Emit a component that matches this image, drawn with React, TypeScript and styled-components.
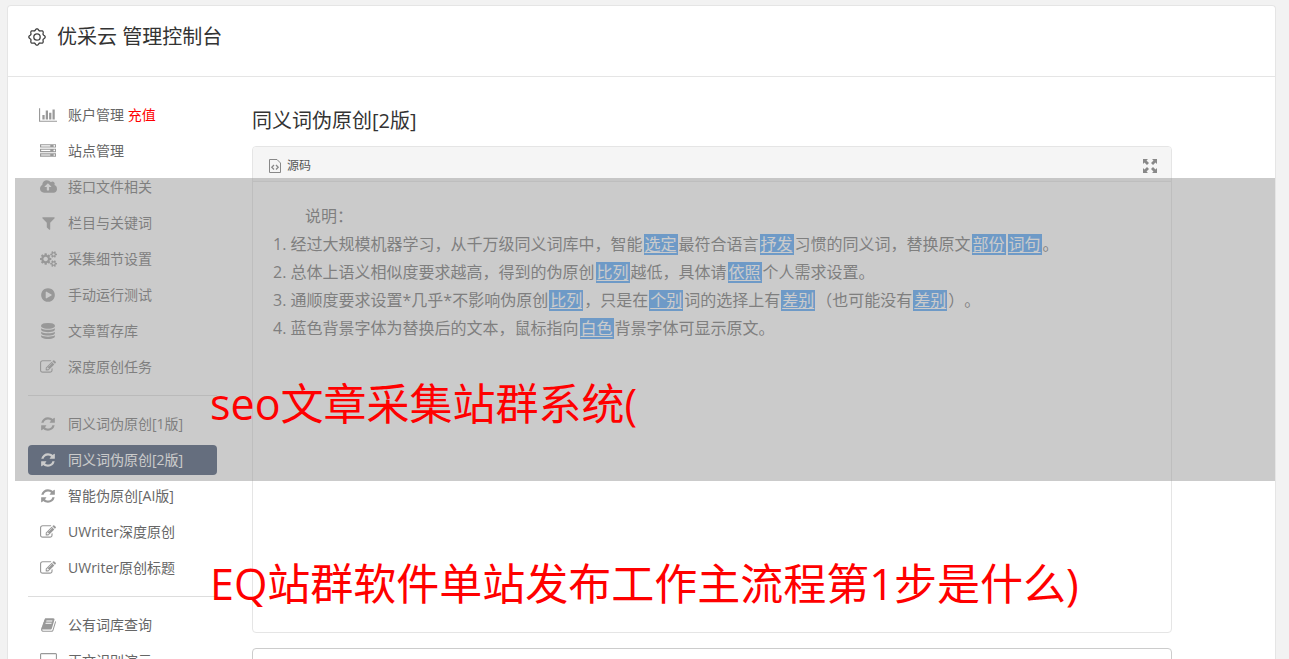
import React from 'react';
import styled, { createGlobalStyle } from 'styled-components';

const GlobalStyle = createGlobalStyle`
  *, *::before, *::after { box-sizing: border-box; }
  body {
    margin: 0;
    background: #f2f2f2;
    font-family: "Open Sans", "Noto Sans CJK SC", sans-serif;
    font-weight: 400;
    font-size: 14px;
    color: #333;
    text-spacing-trim: space-all;
  }
`;

const Page = styled.div`
  position: relative;
  display: flex;
  height: 100vh;
  padding: 5px 13px 0 7px;
  overflow: hidden;
`;

const Panel = styled.div`
  flex: 1;
  min-width: 0;
  min-height: 100vh;
  background: #fff;
  border: 1px solid #e5e5e5;
  border-bottom: 0;
  border-radius: 4px 4px 0 0;
`;

const Header = styled.header`
  display: flex;
  align-items: center;
  gap: 11px;
  height: 71px;
  padding: 0 20px 8px;
  border-bottom: 1px solid #e5e5e5;
`;

const Brand = styled.h1`
  margin: 0;
  font-size: 20px;
  line-height: 28px;
  font-weight: 400;
`;

const Body = styled.div`
  display: flex;
  align-items: flex-start;
  gap: 35px;
  padding: 23px 103px 0 20px;
`;

const Nav = styled.nav`
  flex: none;
  width: 189px;
`;

const NavList = styled.ul`
  display: flex;
  flex-direction: column;
  gap: 6px;
  margin: 0;
  padding: 0;
  list-style: none;
`;

const Divider = styled.hr`
  height: 1px;
  margin: 13px 0;
  border: 0;
  background: #ddd;
`;

const NavLink = styled.a<{ $active?: boolean }>`
  display: flex;
  align-items: center;
  gap: 10px;
  height: 30px;
  padding: 0 10px;
  border-radius: 4px;
  color: ${(p) => (p.$active ? '#fff' : '#666')};
  background: ${(p) => (p.$active ? '#334565' : 'transparent')};
  line-height: 20px;
  text-decoration: none;
  white-space: nowrap;
`;

const IconSlot = styled.span<{ $active?: boolean }>`
  display: flex;
  flex: none;
  justify-content: center;
  width: 20px;
  color: ${(p) => (p.$active ? '#fff' : '#999')};
`;

const Recharge = styled.span`
  color: #f00;
`;

const Main = styled.main`
  flex: 1;
  min-width: 0;
`;

const Title = styled.h2`
  margin: 7px 0 11px;
  font-size: 20px;
  line-height: 28px;
  font-weight: 400;
`;

const Card = styled.section`
  display: flex;
  flex-direction: column;
  min-height: 487px;
  border: 1px solid #e5e5e5;
  border-radius: 4px;
  overflow: hidden;
`;

const Toolbar = styled.div`
  display: flex;
  align-items: center;
  justify-content: space-between;
  height: 35px;
  padding: 3px 14px 0 16px;
  background: #f5f5f5;
  border-bottom: 1px solid #e5e5e5;
`;

const ToolButton = styled.button`
  display: flex;
  align-items: center;
  gap: 6px;
  margin: 0;
  padding: 0;
  border: 0;
  background: none;
  color: #555;
  font: inherit;
  font-size: 12px;
  line-height: 16px;
`;

const Content = styled.div`
  padding: 20px;
  color: #666;
  font-size: 16px;
  line-height: 28px;
`;

const Line = styled.p<{ $indent?: boolean }>`
  margin: 0;
  text-indent: ${(p) => (p.$indent ? '2em' : '0')};
`;

const Word = styled.span`
  display: inline-block;
  height: 21px;
  margin: 0 1px;
  padding: 0 1px;
  background: #459df7;
  color: #fff;
  line-height: 20px;
  text-decoration: underline;
  text-underline-offset: 2px;
  text-indent: 0;
`;

const Result = styled.textarea`
  display: block;
  width: 100%;
  height: 120px;
  margin-top: 15px;
  padding: 8px;
  border: 1px solid #ccc;
  border-radius: 4px;
  background: #fff;
  resize: none;
  font: inherit;
`;

const Shade = styled.div`
  position: absolute;
  top: 178px;
  left: 15px;
  right: 14px;
  height: 303px;
  background: rgba(151, 151, 151, 0.5);
  pointer-events: none;
`;

const Caption = styled.div`
  position: absolute;
  top: 314px;
  left: 210px;
  color: #f00;
  font-size: 43px;
  line-height: 180px;
  white-space: nowrap;
  pointer-events: none;
`;

type Glyph = { w: number; d: string };

const icons: Record<string, Glyph> = {
  chart: {
    w: 2048,
    d: 'M640 896v512H384V896h256zm384-512v1024H768V384h256zm1024 1152v128H0V128h128v1408h1920zM1408 640v768h-256V640h256zm384-384v1152h-256V256h256z',
  },
  server: {
    w: 1792,
    d: 'M128 1408h1024v-128H128v128zm0-512h1024V768H128v128zm1568 448q0-40-28-68t-68-28-68 28-28 68 28 68 68 28 68-28 28-68zM128 384h1024V256H128v128zm1568 448q0-40-28-68t-68-28-68 28-28 68 28 68 68 28 68-28 28-68zm0-512q0-40-28-68t-68-28-68 28-28 68 28 68 68 28 68-28 28-68zm96 832v384H0v-384h1792zm0-512v384H0V640h1792zm0-512v384H0V128h1792z',
  },
  cloud: {
    w: 1920,
    d: 'M1280 864q0-14-9-23L919 489q-9-9-23-9t-23 9L522 840q-10 12-10 24 0 14 9 23t23 9h224v352q0 13 9.5 22.5t22.5 9.5h192q13 0 22.5-9.5t9.5-22.5V896h224q13 0 22.5-9.5t9.5-22.5zm640 288q0 159-112.5 271.5T1536 1536H448q-185 0-316.5-131.5T0 1088q0-130 70-240t188-165q-2-30-2-43 0-212 150-362t362-150q156 0 285.5 87T1242 346q71-62 166-62 106 0 181 75t75 181q0 76-41 138 130 31 213.5 135.5T1920 1152z',
  },
  filter: {
    w: 1408,
    d: 'M1403 295q17 41-14 70L896 858v742q0 42-39 59-13 5-25 5-27 0-45-19l-256-256q-19-19-19-45V858L19 365q-31-29-14-70 17-39 59-39h1280q42 0 59 39z',
  },
  cogs: {
    w: 1920,
    d: 'M896 896q0-106-75-181t-181-75-181 75-75 181 75 181 181 75 181-75 75-181zm768 512q0-52-38-90t-90-38-90 38-38 90q0 53 37.5 90.5t90.5 37.5 90.5-37.5 37.5-90.5zm0-1024q0-52-38-90t-90-38-90 38-38 90q0 53 37.5 90.5T1536 512t90.5-37.5T1664 384zm-384 421v185q0 10-7 19.5t-16 10.5l-155 24q-11 35-32 76 34 48 90 115 7 11 7 20 0 12-7 19-23 30-82.5 89.5T999 1423q-11 0-21-7l-115-90q-37 19-77 31-11 108-23 155-7 24-30 24H547q-11 0-20-7.5t-10-17.5l-23-153q-34-10-75-31l-118 89q-7 7-20 7-11 0-21-8-144-133-144-160 0-9 7-19 10-14 41-53t47-61q-23-44-35-82l-152-24q-10-1-17-9.5T0 987V802q0-10 7-19.5T23 772l155-24q11-35 32-76-34-48-90-115-7-11-7-20 0-12 7-20 22-30 82-89t79-59q11 0 21 7l115 90q34-18 77-32 11-108 23-154 7-24 30-24h186q11 0 20 7.5t10 17.5l23 153q34 10 75 31l118-89q8-7 20-7 11 0 21 8 144 133 144 160 0 8-7 19-12 16-42 54t-45 60q23 48 34 82l152 23q10 2 17 10.5t7 19.5zm640 533v140q0 16-149 31-12 27-30 52 51 113 51 138 0 4-4 7-122 71-124 71-8 0-46-47t-52-68q-20 2-30 2t-30-2q-14 21-52 68t-46 47q-2 0-124-71-4-3-4-7 0-25 51-138-18-25-30-52-149-15-149-31v-140q0-16 149-31 13-29 30-52-51-113-51-138 0-4 4-7 4-2 35-20t59-34 30-16q8 0 46 46.5t52 67.5q20-2 30-2t30 2q51-71 92-112l6-2q4 0 124 70 4 3 4 7 0 25-51 138 17 23 30 52 149 15 149 31zm0-1024v140q0 16-149 31-12 27-30 52 51 113 51 138 0 4-4 7-122 71-124 71-8 0-46-47t-52-68q-20 2-30 2t-30-2q-14 21-52 68t-46 47q-2 0-124-71-4-3-4-7 0-25 51-138-18-25-30-52-149-15-149-31V314q0-16 149-31 13-29 30-52-51-113-51-138 0-4 4-7 4-2 35-20t59-34 30-16q8 0 46 46.5t52 67.5q20-2 30-2t30 2q51-71 92-112l6-2q4 0 124 70 4 3 4 7 0 25-51 138 17 23 30 52 149 15 149 31z',
  },
  play: {
    w: 1536,
    d: 'M768 128q209 0 385.5 103T1433 510.5 1536 896t-103 385.5-279.5 279.5T768 1664t-385.5-103T103 1281.5 0 896t103-385.5T382.5 231 768 128zm384 823q32-18 32-55t-32-55L608 521q-31-19-64-1-32 19-32 56v640q0 37 32 56 16 8 32 8 17 0 32-9z',
  },
  database: {
    w: 1536,
    d: 'M768 768q237 0 443-43t325-127v170q0 69-103 128t-280 93.5-385 34.5-385-34.5-280-93.5T0 768V598q119 84 325 127t443 43zm0 768q237 0 443-43t325-127v170q0 69-103 128t-280 93.5-385 34.5-385-34.5-280-93.5T0 1536v-170q119 84 325 127t443 43zm0-384q237 0 443-43t325-127v170q0 69-103 128t-280 93.5-385 34.5-385-34.5-280-93.5T0 1152V982q119 84 325 127t443 43zM768 0q208 0 385 34.5t280 93.5 103 128v128q0 69-103 128t-280 93.5T768 640t-385-34.5T103 512 0 384V256q0-69 103-128t280-93.5T768 0z',
  },
  edit: {
    w: 1792,
    d: 'M888 1184l116-116-152-152-116 116v56h96v96h56zm440-720q-16-16-33 1L945 815q-17 17-1 33t33-1l350-350q17-17 1-33zm80 594v190q0 119-84.5 203.5T1120 1536H288q-119 0-203.5-84.5T0 1248V416q0-119 84.5-203.5T288 128h832q63 0 117 25 15 7 18 23 3 17-9 29l-49 49q-14 14-32 8-23-6-45-6H288q-66 0-113 47t-47 113v832q0 66 47 113t113 47h832q66 0 113-47t47-113v-126q0-13 9-22l64-64q15-15 35-7t20 29zm-96-738l288 288-672 672H640V992zm444 132l-92 92-288-288 92-92q28-28 68-28t68 28l152 152q28 28 28 68t-28 68z',
  },
  refresh: {
    w: 1536,
    d: 'M1511 1056q0 5-1 7-64 268-268 434.5T764 1664q-146 0-282.5-55T238 1452l-129 129q-19 19-45 19t-45-19-19-45v-448q0-26 19-45t45-19h448q26 0 45 19t19 45-19 45l-137 137q71 66 161 102t187 36q134 0 250-65t186-179q11-17 53-117 8-23 30-23h192q13 0 22.5 9.5t9.5 22.5zm25-800v448q0 26-19 45t-45 19h-448q-26 0-45-19t-19-45 19-45l138-138Q969 384 768 384q-134 0-250 65T332 628q-11 17-53 117-8 23-30 23H50q-13 0-22.5-9.5T18 736v-7q65-268 270-434.5T768 128q146 0 284 55.5T1297 340l130-129q19-19 45-19t45 19 19 45z',
  },
  book: {
    w: 1664,
    d: 'M1639 478q40 57 18 129l-275 906q-19 64-76.5 107.5T1183 1664H260q-77 0-148.5-53.5T12 1479q-24-67-2-127 0-4 3-27t4-37q1-8-3-21.5t-3-19.5q2-11 8-21t16.5-23.5T52 1179q23-38 45-91.5t30-91.5q3-10 .5-30t-.5-28q3-11 17-28t17-23q21-36 42-92t25-90q1-9-2.5-32t.5-28q4-13 22-30.5t22-22.5q19-26 42.5-84.5T340 411q1-8-3-25.5t-2-26.5q2-8 9-18t18-23 17-21q8-12 16.5-30.5t15-35 16-36 19.5-32 26.5-23.5 36-11.5T556 134l-1 3q38-9 51-9h761q74 0 114 56t18 130l-274 906q-36 119-71.5 153.5T1025 1408H156q-27 0-38 15-11 16-1 43 24 70 144 70h923q29 0 56-15.5t35-41.5l300-987q7-22 5-57 38 15 59 43zm-1064 2q-4 13 2 22.5t20 9.5h608q13 0 25.5-9.5T1247 480l21-64q4-13-2-22.5t-20-9.5H638q-13 0-25.5 9.5T596 416zm-83 256q-4 13 2 22.5t20 9.5h608q13 0 25.5-9.5T1164 736l21-64q4-13-2-22.5t-20-9.5H555q-13 0-25.5 9.5T513 672z',
  },
  desktop: {
    w: 1920,
    d: 'M1792 992V160q0-13-9.500-22.500T1760 128H160q-13 0-22.500 9.500T128 160v832q0 13 9.500 22.500t22.500 9.500h1600q13 0 22.500-9.500t9.500-22.500zm128-832v1088q0 66-47 113t-113 47h-544q0 37 16 77.500t32 71 16 43.500q0 26-19 45t-45 19H704q-26 0-45-19t-19-45q0-14 16-44t32-70 16-78H160q-66 0-113-47T0 1248V160Q0 94 47 47T160 0h1600q66 0 113 47t47 113z',
  },
};

function Icon({ name }: { name: string }) {
  const { w, d } = icons[name];
  return (
    <svg width={Math.round((w * 16) / 1792)} height="16" viewBox={`0 0 ${w} 1792`} fill="currentColor" aria-hidden="true">
      <path d={d} />
    </svg>
  );
}

type Item = { icon: string; label: string; extra?: string; active?: boolean };

const groups: Item[][] = [
  [
    { icon: 'chart', label: '账户管理', extra: '充值' },
    { icon: 'server', label: '站点管理' },
    { icon: 'cloud', label: '接口文件相关' },
    { icon: 'filter', label: '栏目与关键词' },
    { icon: 'cogs', label: '采集细节设置' },
    { icon: 'play', label: '手动运行测试' },
    { icon: 'database', label: '文章暂存库' },
    { icon: 'edit', label: '深度原创任务' },
  ],
  [
    { icon: 'refresh', label: '同义词伪原创[1版]' },
    { icon: 'refresh', label: '同义词伪原创[2版]', active: true },
    { icon: 'refresh', label: '智能伪原创[AI版]' },
    { icon: 'edit', label: 'UWriter深度原创' },
    { icon: 'edit', label: 'UWriter原创标题' },
  ],
  [
    { icon: 'book', label: '公有词库查询' },
    { icon: 'desktop', label: '正文识别演示' },
  ],
];

function Sidebar() {
  return (
    <Nav>
      {groups.map((items, i) => (
        <React.Fragment key={i}>
          {i > 0 && <Divider />}
          <NavList>
            {items.map((item) => (
              <li key={item.label}>
                <NavLink href="#" $active={item.active} aria-current={item.active ? 'page' : undefined}>
                  <IconSlot $active={item.active}>
                    <Icon name={item.icon} />
                  </IconSlot>
                  <span>
                    {item.label}
                    {item.extra && <Recharge> {item.extra}</Recharge>}
                  </span>
                </NavLink>
              </li>
            ))}
          </NavList>
        </React.Fragment>
      ))}
    </Nav>
  );
}

/* Scalloped rim with eight rounded lobes, traced as a closed polar curve. */
const rim =
  Array.from({ length: 96 }, (_, i) => {
    const a = (i / 96) * Math.PI * 2;
    const r = 7.4 + 0.8 * Math.cos(a * 8);
    return `${i ? 'L' : 'M'}${(9 + r * Math.cos(a)).toFixed(2)} ${(9 + r * Math.sin(a)).toFixed(2)}`;
  }).join('') + 'z';

function GearIcon() {
  return (
    <svg width="18" height="18" viewBox="0 0 18 18" fill="none" stroke="#444" strokeWidth="1.3" aria-hidden="true">
      <path d={rim} />
      <circle cx="9" cy="9" r="3.2" />
    </svg>
  );
}

function SourceIcon() {
  return (
    <svg width="12" height="14" viewBox="0 0 12 14" fill="none" stroke="#888" aria-hidden="true">
      <path d="M.5.5h7.500l3.500 3.500v9.500H.5z" />
      <path d="M5 6 2.800 8.300 5 10.500M7 6l2.200 2.300L7 10.500" strokeWidth="1.300" />
    </svg>
  );
}

function ExpandIcon() {
  return (
    <svg width="14" height="14" viewBox="0 0 14 14" fill="#888" aria-hidden="true">
      <path d="M0 0h5L3.500 1.500 6 4 4 6 1.500 3.500 0 5zM14 0v5l-1.500-1.500L10 6 8 4l2.500-2.500L9 0zM0 14V9l1.500 1.500L4 8l2 2-2.500 2.500L5 14zM14 14H9l1.500-1.500L8 10l2-2 2.500 2.500L14 9z" />
    </svg>
  );
}

export default function App() {
  return (
    <>
      <GlobalStyle />
      <Page>
        <Panel>
          <Header>
            <GearIcon />
            <Brand>优采云 管理控制台</Brand>
          </Header>
          <Body>
            <Sidebar />
            <Main>
              <Title>同义词伪原创[2版]</Title>
              <Card>
                <Toolbar>
                  <ToolButton type="button">
                    <SourceIcon />
                    源码
                  </ToolButton>
                  <ToolButton type="button" aria-label="全屏">
                    <ExpandIcon />
                  </ToolButton>
                </Toolbar>
                <Content>
                  <Line $indent>说明：</Line>
                  <Line>
                    1. 经过大规模机器学习，从千万级同义词库中，智能<Word>选定</Word>最符合语言<Word>抒发</Word>
                    习惯的同义词，替换原文<Word>部份</Word><Word>词句</Word>。
                  </Line>
                  <Line>
                    2. 总体上语义相似度要求越高，得到的伪原创<Word>比列</Word>越低，具体请<Word>依照</Word>
                    个人需求设置。
                  </Line>
                  <Line>
                    3. 通顺度要求设置*几乎*不影响伪原创<Word>比列</Word>，只是在<Word>个别</Word>词的选择上有
                    <Word>差别</Word>（也可能没有<Word>差别</Word>）。
                  </Line>
                  <Line>
                    4. 蓝色背景字体为替换后的文本，鼠标指向<Word>白色</Word>背景字体可显示原文。
                  </Line>
                </Content>
              </Card>
              <Result aria-label="结果" />
            </Main>
          </Body>
        </Panel>
        <Shade />
        <Caption>
          seo文章采集站群系统(
          <br />
          EQ站群软件单站发布工作主流程第1步是什么)
        </Caption>
      </Page>
    </>
  );
}
